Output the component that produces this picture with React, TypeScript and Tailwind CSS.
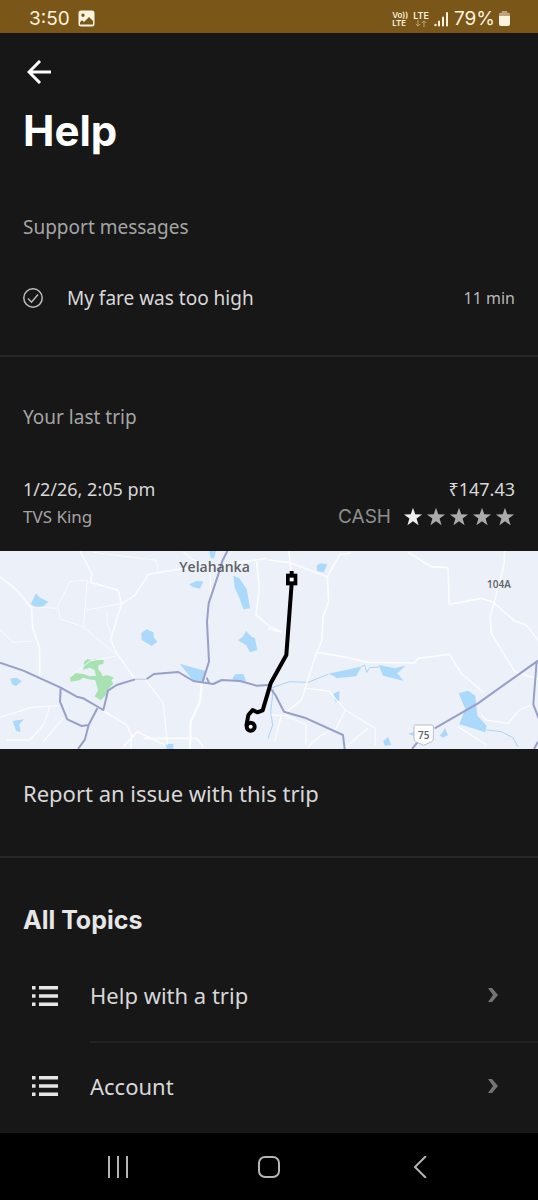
import { ReactNode } from "react";

const topics = ["Help with a trip", "Account"];

const ratings = [1, 2, 3, 4, 5];

const StatusBar = () => (
  <div className="flex h-[33px] items-center justify-between bg-[#7a5618] pt-1 pr-7 pl-[29px] text-[#fdf3df]">
    <div className="flex items-center gap-2 font-['Inter'] text-[19px] leading-6">
      <span>3:50</span>
      <svg viewBox="0 0 17 17" className="h-[17px] w-[17px]">
        <path
          fillRule="evenodd"
          fill="currentColor"
          d="M3 .5h11A2.5 2.5 0 0 1 16.500 3v11a2.500 2.500 0 0 1-2.500 2.500H3A2.500 2.500 0 0 1 .5 14V3A2.500 2.500 0 0 1 3 .5ZM5 3.600a1.700 1.700 0 1 0 0 3.400 1.700 1.700 0 0 0 0-3.400ZM2 12.200V14.500h13V11l-4-4-5 5-2-1.700Z"
        />
      </svg>
    </div>
    <div className="flex items-center gap-[5px] font-['Inter']">
      <div className="text-[8px] leading-[8px] font-semibold">
        <div>Vo))</div>
        <div>LTE</div>
      </div>
      <div className="flex flex-col items-center text-[9px] leading-[9px] font-semibold">
        <span>LTE</span>
        <svg viewBox="0 0 12 7" className="h-[7px] w-3 opacity-50" fill="none" stroke="currentColor">
          <path d="M3 0v6M.8 4 3 6.200 5.200 4M9 7V1M6.800 3 9 .8 11.200 3" />
        </svg>
      </div>
      <svg viewBox="0 0 15 16" className="h-4 w-[15px]" fill="currentColor">
        <circle cx="1.500" cy="14" r="1.200" />
        <rect x="4" y="9.500" width="2" height="6" rx="1" />
        <rect x="8" y="5.500" width="2" height="10" rx="1" />
        <rect x="12" y="1" width="2" height="14.500" rx="1" />
      </svg>
      <div className="flex items-center gap-1">
        <span className="text-[19px] leading-6">79%</span>
        <svg viewBox="0 0 11 15" className="h-[15px] w-[11px]" fill="currentColor">
          <path d="M3 0h5v1.500h1a2 2 0 0 1 2 2V6H0V3.500a2 2 0 0 1 2-2h1Z" opacity=".5" />
          <path d="M0 5h11v8a2 2 0 0 1-2 2H2a2 2 0 0 1-2-2Z" />
        </svg>
      </div>
    </div>
  </div>
);

const TripMap = () => (
  <svg viewBox="0 18 1614 594" className="block w-full bg-[#ecf0f8]" role="img" aria-label="Trip route">
    <g fill="#abd9fb">
      <path d="M92 178 108 145 118 157 145 170 130 184 108 187Z" />
      <path d="M567 118 590 108 610 109 600 131 578 126Z" />
      <path d="M628 18h20l-6 22h-10ZM700 92l18 8 22 32 10 58-20 3-12-35-14-30Z" />
      <path d="M424 264 440 253 460 262 462 278 472 290 455 303 425 285Z" />
      <path d="M714 286 728 275 738 258 755 275 765 280 772 315 750 322 738 300Z" />
      <path d="M540 357 618 378 612 408 578 406Z" />
      <path d="M697 402 705 388 730 387 738 408 718 412Z" />
      <path d="M31 401 50 398 65 408 48 424 36 418Z" />
      <path d="M38 528 72 523 58 538 62 562 48 557Z" />
      <path d="M498 597h22v15h-20Z" />
    </g>
    <path
      fill="#a9e2b2"
      d="M252 352 262 342 280 346 284 342 312 346 310 356 296 360 294 372 304 384 308 394 322 390 342 398 334 406 340 416 322 436 318 450 302 466 284 454 294 436 290 420 286 406 262 402 250 398 238 406 212 410 210 398 226 384 252 388 270 394 288 392 284 376 270 368 250 374Z"
    />

    <g fill="none" stroke="#fff" strokeWidth="5" strokeLinejoin="round" opacity=".8">
      <path d="M0 96 50 135 80 172 95 190 98 250 118 305 120 390" />
      <path d="M240 18 275 85 272 112 355 136 364 178 345 240 332 285 350 325 405 402" />
      <path d="M364 178 405 150 445 88 540 72 630 66 800 40" />
      <path d="M550 20 572 40 630 66 632 160" strokeWidth="4" />
      <path d="M770 50 778 130 768 210 810 245 845 260" strokeWidth="5" />
      <path d="M95 186 170 190 210 110 262 105 250 245M175 190 180 222 248 245 345 325" strokeWidth="3" />
      <path d="M258 195 364 176M320 195 322 240 335 270M280 22 470 46 474 76M0 255 40 292 98 288M212 395 270 348 350 333" strokeWidth="3" />
      <path d="M435 402 490 475 502 600" strokeWidth="4" />
      <path d="M310 497 380 540 395 570 392 612M370 605 412 560 495 600M430 580H590L610 605" />
      <path d="M606 410 600 470 572 530 570 612" strokeWidth="7" />
      <path d="M0 517 95 487 175 482M20 585H90L130 540 150 485M130 590 190 520" strokeWidth="4" />
    </g>
    <g fill="none" stroke="#989fc8" strokeWidth="6" strokeLinejoin="round">
      <path d="M0 353 70 377 182 428 230 455 250 460 310 495 324 437 350 420 405 403M440 402 462 387 535 381 580 408 640 417 665 405 720 408 770 422 805 420" />
      <path d="M405 403H440" stroke="#cfd3df" strokeWidth="4" />
      <path d="M182 430 180 470 202 523 245 543 266 540M292 490 266 540 255 583 234 612" />
      <path d="M682 18 667 48 656 85 626 175 621 230 627 350 608 410M620 398 628 416" />
    </g>

    <g transform="translate(804 0)">
      <g fill="#abd9fb">
        <path d="M145 64 155 55 178 57 168 82 148 78Z" />
        <path d="M180 386 230 376 282 364 264 394 205 400 196 392Z" />
        <path d="M332 360 380 370 412 362 388 385 406 407 345 392Z" />
        <path d="M196 446 214 438 214 469 202 470Z" />
        <path d="M572 445 600 437 622 452 628 512 656 542 652 562 600 545 574 538 592 492Z" />
        <path d="M515 572 525 560 530 548 540 570 526 578ZM420 566 440 560V574ZM346 588 360 576 370 600 350 602Z" />
      </g>
      <g fill="none" stroke="#abd4f5" strokeWidth="3">
        <path d="M0 432 65 410 120 412 180 388M282 364 290 360 296 382 305 368 332 366" />
        <path d="M16 432 8 500 14 540 0 580M656 555 700 560 735 578 750 606" />
      </g>
      <g fill="none" stroke="#fff" strokeWidth="5" strokeLinejoin="round" opacity=".8">
        <path d="M0 45 62 52 178 95 182 170 165 215 162 285 145 325 100 465 50 505" />
        <path d="M62 18 70 80M178 95 216 28 250 24M145 322 220 334 300 352 440 354 450 340 545 328 580 385 650 445" />
        <path d="M420 22 490 65 540 68 544 178 640 160 676 172M710 18 708 60 682 160 666 215 670 265 740 380 810 402M676 172 740 228 775 240 810 285" />
        <path d="M0 250 40 262M10 510 55 512 114 540V600M40 510 20 590M114 430 182 438 232 495 322 550V600" strokeWidth="4" />
        <path d="M120 606 160 570 205 550M232 495 205 550M235 605 300 550M640 510 655 525 720 535 755 495 790 480M570 545 655 600" strokeWidth="4" />
      </g>
      <g fill="none" stroke="#989fc8" strokeWidth="6" strokeLinejoin="round">
        <path d="M0 420 22 450 48 500 110 518 225 570 230 612" />
        <path d="M810 347 630 475 500 550M450 590 432 612M806 350 796 478 812 520M810 590 798 612" />
      </g>
      <path d="M438 544q0-4 4-4h50q4 0 4 4v38q0 5-5 8l-24 11-24-11q-5-3-5-8Z" fill="#fff" stroke="#b9bdc9" strokeWidth="3" />
    </g>

    <path
      d="M875 115 859 330 812 415 788 496 772 502 758 495 745 510 739 543"
      fill="none"
      stroke="#000"
      strokeWidth="12"
      strokeLinejoin="round"
    />
    <circle cx="752" cy="545" r="12" fill="#fff" stroke="#000" strokeWidth="12" />
    <path d="M858 86h34v35h-34Z" fill="#000" />
    <path d="M869 78h12v12h-12Z" fill="#000" />
    <path d="M869 98h12v11h-12Z" fill="#fff" />

    <g fontFamily="Open Sans, sans-serif" fontWeight="600" fill="#5d6066">
      <text x="538" y="81" fontSize="42">Yelahanka</text>
      <text x="1461" y="129" fontSize="30">104A</text>
      <text x="1254" y="583" fontSize="30">75</text>
    </g>
  </svg>
);

const Star = ({ active }: { active: boolean }) => (
  <svg viewBox="0 0 24 24" className={active ? "h-5 w-5 text-[#eeeeee]" : "h-5 w-5 text-[#ababab]"}>
    <path fill="currentColor" d="m12 1 2.700 7.800 8.200.1-6.600 5L18.700 22 12 17.200 5.300 22l2.400-8.100-6.600-5 8.200-.1Z" />
  </svg>
);

const ListIcon = () => (
  <svg viewBox="0 0 26 20" className="h-5 w-[26px] text-[#e6e6e6]" fill="currentColor">
    <path d="M0 0h3.500v3.500H0ZM7 0h19v3.500H7ZM0 8.300h3.500v3.500H0ZM7 8.300h19v3.500H7ZM0 16.500h3.500V20H0ZM7 16.500h19V20H7Z" />
  </svg>
);

const Chevron = () => (
  <svg viewBox="0 0 10 14" className="h-[14px] w-[10px] text-[#747474]" fill="currentColor">
    <path d="M0 0h4l6 7-6 7H0l5-7Z" />
  </svg>
);

const SectionLabel = ({ children }: { children: ReactNode }) => (
  <h2 className="text-[19px] leading-7 text-[#a5a5a5]">{children}</h2>
);

const NavBar = () => (
  <nav className="mt-auto flex h-[67px] items-center justify-around bg-black px-[42px] text-[#b5b5b5]">
    <button aria-label="Recent apps" className="p-2">
      <svg viewBox="0 0 22 22" className="h-[22px] w-[22px]" stroke="currentColor" strokeWidth="2">
        <path d="M2 0v22M11 0v22M20 0v22" />
      </svg>
    </button>
    <button aria-label="Home" className="p-2">
      <svg viewBox="0 0 22 22" className="h-[22px] w-[22px]" fill="none" stroke="currentColor" strokeWidth="2">
        <rect x="1" y="1" width="20" height="20" rx="6" />
      </svg>
    </button>
    <button aria-label="Back" className="p-2">
      <svg viewBox="0 0 22 22" className="h-[22px] w-[22px]" fill="none" stroke="currentColor" strokeWidth="2">
        <path d="M17 0 6 11l11 11" />
      </svg>
    </button>
  </nav>
);

const App = () => {
  return (
    <div className="flex min-h-screen flex-col bg-[#171717] font-['Noto_Sans',sans-serif] text-[#d8d8d8]">
      <StatusBar />

      <header className="px-[23px] pt-[23px]">
        <button aria-label="Go back" className="block p-1 text-white">
          <svg viewBox="0 0 24 24" className="h-6 w-6" fill="none" stroke="currentColor" strokeWidth="3">
            <path d="M24 12H3M13 1 2 12l11 11" />
          </svg>
        </button>
        <h1 className="mt-[18px] font-['Inter'] text-[42px] leading-[50px] font-bold text-white">Help</h1>
      </header>

      <section className="border-b-2 border-[#262626] px-[23px] pt-[57px] pb-[43px]">
        <SectionLabel>Support messages</SectionLabel>
        <a href="#message" className="mt-[43px] flex items-center">
          <svg viewBox="0 0 20 20" className="h-5 w-5 text-[#bdbdbd]" fill="none" stroke="currentColor" strokeWidth="1.500">
            <circle cx="10" cy="10" r="9.200" />
            <path d="m5 10.500 3.500 3.700L15 6.500" />
          </svg>
          <span className="ml-6 text-[19px] leading-7">My fare was too high</span>
          <span className="ml-auto text-base leading-7 text-[#b8b8b8]">11 min</span>
        </a>
      </section>

      <section className="border-b-2 border-[#262626]">
        <div className="px-[23px] pt-[46px] pb-5">
          <SectionLabel>Your last trip</SectionLabel>
          <div className="mt-11 flex justify-between text-lg leading-7">
            <span>1/2/26, 2:05 pm</span>
            <span>₹147.43</span>
          </div>
          <div className="flex items-center justify-between leading-7 text-[#a5a5a5]">
            <span className="text-[17px] leading-7">TVS King</span>
            <div className="flex items-center">
              <span className="font-['Inter'] text-[19px] leading-7 text-[#8f8f8f]">CASH</span>
              <div className="ml-3 flex gap-[3px]">
                {ratings.map((rating) => (
                  <Star key={rating} active={rating === 1} />
                ))}
              </div>
            </div>
          </div>
        </div>
        <TripMap />
        <a href="#report" className="block px-[23px] pt-7 pb-[47px] text-[22px] leading-8">
          Report an issue with this trip
        </a>
      </section>

      <section className="pt-[46px]">
        <h2 className="px-[23px] font-['Inter'] text-[25px] leading-8 font-bold text-[#e6e6e6]">All Topics</h2>
        <ul className="mt-4">
          {topics.map((topic) => (
            <li key={topic} className="group h-[91px] last:h-[89px]">
              <a href="#topic" className="flex h-full items-center pl-8">
                <div className="pb-1">
                  <ListIcon />
                </div>
                <div className="ml-8 flex h-full flex-1 items-center justify-between border-b-2 border-[#222222] pr-10 pb-1 group-last:border-0">
                  <span className="text-[22px] leading-8">{topic}</span>
                  <Chevron />
                </div>
              </a>
            </li>
          ))}
        </ul>
      </section>

      <NavBar />
    </div>
  );
};

export default App;
